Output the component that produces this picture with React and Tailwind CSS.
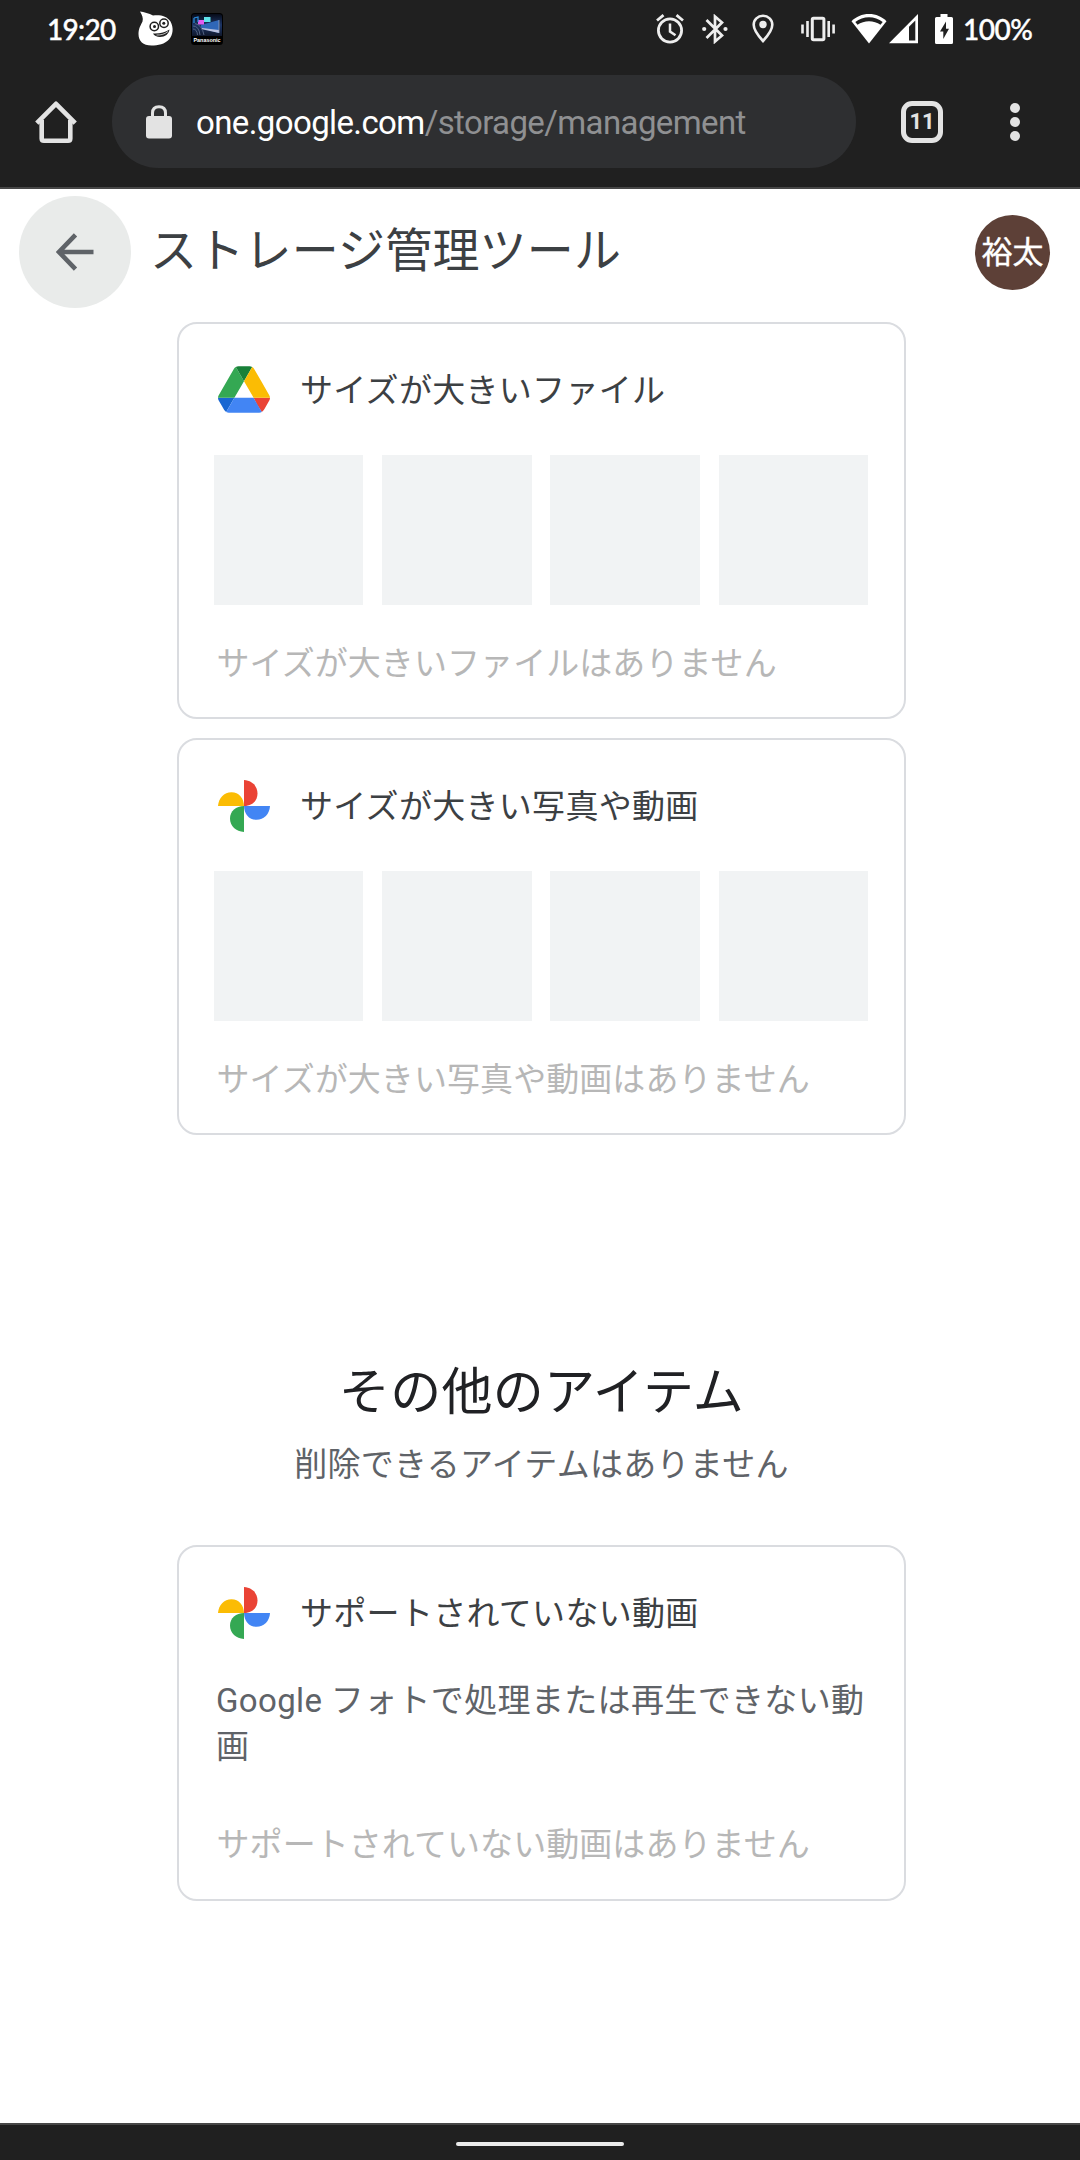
import React from 'react';

const SlimeIcon = () => (
  <svg width="36" height="36" viewBox="0 0 36 36">
    <path
      d="M2 .5C6 1 11 2.500 15 4.500C22 3.500 29 5 32.500 10.500C36 17 35 24 31 28.500C27 33 20 34.500 13.500 34.500C5 34.500 .5 30 .5 23C.5 17 3 14 4.500 10.500C5.500 7 4 4 2 .5Z"
      fill="#fff"
    />
    <g fill="#fff" stroke="#202020" strokeWidth="1.500">
      <circle cx="16.300" cy="15.500" r="4.200" />
      <circle cx="26" cy="12.300" r="4.200" />
    </g>
    <circle cx="16.500" cy="15.500" r="1.500" fill="#202020" />
    <circle cx="25.800" cy="12.300" r="1.500" fill="#202020" />
    <path d="M15 22.500C21 23 27 21.500 31.500 18.500C31 23 27 26 22 26C19 26 16 24.800 15 22.500Z" fill="#202020" />
    <path d="M18.500 24C23 24.300 27 23 30 20.500" fill="none" stroke="#fff" strokeWidth=".7" />
  </svg>
);

const PanasonicIcon = () => (
  <svg width="32" height="32" viewBox="0 0 32 32">
    <defs>
      <linearGradient id="tvBg" x1="0" y1="0" x2="0" y2="1">
        <stop offset="0" stopColor="#070b18" />
        <stop offset=".5" stopColor="#1c3566" />
        <stop offset="1" stopColor="#10182c" />
      </linearGradient>
    </defs>
    <rect width="32" height="32" rx="3.500" fill="#000" />
    <path d="M1 3.500Q1 1 3.500 1H28.500Q31 1 31 3.500V23H1Z" fill="url(#tvBg)" />
    <path d="M10 12L28 7V20L10 15Z" fill="#2f67b8" />
    <path d="M11 15L28 17V20L10 16Z" fill="#b9c2df" />
    <path d="M28 7V20" stroke="#9aa5bd" strokeWidth=".8" />
    <rect x="13" y="4" width="6.500" height="5" fill="#5fe3ea" />
    <rect x="7" y="7" width="6" height="4.500" fill="#e25cf0" />
    <path d="M3 5L7 4V9M3 5V10" fill="none" stroke="#2a8fe0" strokeWidth="1.200" />
    <g fill="none" stroke="#536282" strokeWidth="1">
      <path d="M2 13Q8 13 9 22" />
      <path d="M2 16Q6 16 6.500 22" />
      <path d="M4 10.500Q11 12 13 22" />
    </g>
    <text x="16" y="29" textAnchor="middle" fill="#fff" fontSize="6" fontWeight="700" fontFamily="Liberation Sans" textLength="27" lengthAdjust="spacingAndGlyphs">
      Panasonic
    </text>
  </svg>
);

const AlarmIcon = () => (
  <svg width="28" height="30" viewBox="0 0 28 30" fill="none" stroke="#eee">
    <circle cx="14" cy="16.500" r="11.600" strokeWidth="2.800" />
    <path d="M1 6.500L7.500 1.200M27 6.500L20.500 1.200" strokeWidth="2.800" />
    <path d="M14 9.500V17.500L19.500 21.200" strokeWidth="2.500" />
  </svg>
);

const BluetoothIcon = () => (
  <svg width="26" height="30" viewBox="0 0 26 30" fill="none" stroke="#eee">
    <path d="M4.500 6L20 21.500L13 27.500V2.500L20 8.500L4.500 24" strokeWidth="2.700" />
    <circle cx="2.200" cy="15" r="2.100" fill="#eee" stroke="none" />
    <circle cx="23.500" cy="15" r="2.100" fill="#eee" stroke="none" />
  </svg>
);

const PinIcon = () => (
  <svg width="22" height="30" viewBox="0 0 22 30">
    <path
      d="M11 1.800C5.800 1.800 1.700 5.800 1.700 10.800C1.700 17 11 27 11 27S20.300 17 20.300 10.800C20.300 5.800 16.200 1.800 11 1.800Z"
      fill="none"
      stroke="#eee"
      strokeWidth="2.600"
    />
    <circle cx="11" cy="10.500" r="3.700" fill="#eee" />
  </svg>
);

const VibrateIcon = () => (
  <svg width="34" height="26" viewBox="0 0 34 26" fill="none" stroke="#eee" strokeWidth="2.600">
    <rect x="11.300" y="2.300" width="11.600" height="21.400" rx="1.200" strokeWidth="3" />
    <path d="M1.500 8.500V17.500M6.500 5V21M27.700 5V21M32.600 8.500V17.500" />
  </svg>
);

const WifiIcon = () => (
  <svg width="36" height="30" viewBox="0 0 36 30">
    <path d="M18 0C11 0 5 2.700 .5 7.200L18 29.500L35.500 7.200C31 2.700 25 0 18 0Z" fill="#fff" />
    <path d="M4.300 8C12 1.700 24 1.700 31.700 8L29.500 10.800C23 6 13 6 6.500 10.800Z" fill="#202020" />
  </svg>
);

const SignalIcon = () => (
  <svg width="29" height="30" viewBox="0 0 29 30">
    <path d="M0 29.300L29 0V29.300Z" fill="#fff" />
    <path d="M20 12.700L26.300 6.500V26.500H20Z" fill="#202020" />
  </svg>
);

const BatteryIcon = () => (
  <svg width="18" height="30" viewBox="0 0 18 30">
    <path d="M5.500 0H12.500V3H16.500Q18 3 18 4.500V28.500Q18 30 16.500 30H1.500Q0 30 0 28.500V4.500Q0 3 1.500 3H5.500Z" fill="#fff" />
    <path d="M11 7.500L5 17.500H8.300V25L14 14.700H11Z" fill="#202020" />
  </svg>
);

const HomeIcon = () => (
  <svg width="42" height="42" viewBox="0 0 42 42" fill="none" stroke="#e3e3e3" strokeWidth="4.600">
    <path d="M1.800 22.200L21 2.800L40.200 22.200" strokeLinejoin="round" />
    <path d="M6.700 19V37.500Q6.700 39.700 8.900 39.700H33.100Q35.300 39.700 35.300 37.500V19" />
  </svg>
);

const LockIcon = () => (
  <svg width="26" height="34" viewBox="0 0 26 34">
    <rect x="0" y="11" width="26" height="22.500" rx="3" fill="#e3e3e3" />
    <path d="M6.500 12V8Q6.500 1.700 13 1.700T19.500 8V12" fill="none" stroke="#e3e3e3" strokeWidth="3" />
  </svg>
);

const ArrowIcon = () => (
  <svg width="38" height="38" viewBox="0 0 38 38" fill="none" stroke="#5f6368" strokeWidth="4.600">
    <path d="M19.500 1.800L3 19L19.500 36.200M3 19H37.500" />
  </svg>
);

const DriveIcon = () => (
  <svg width="52" height="47" viewBox="0 0 87.300 78">
    <path d="M6.600 66.850l3.850 6.650c.8 1.400 1.950 2.500 3.300 3.300l13.750-23.800H0c0 1.550.4 3.100 1.200 4.500z" fill="#1967d2" />
    <path d="M43.650 25L29.900 1.200c-1.350.8-2.500 1.900-3.300 3.300l-25.400 44A9 9 0 0 0 0 53h27.500z" fill="#34a853" />
    <path d="M73.550 76.800c1.350-.8 2.500-1.900 3.300-3.300l1.600-2.750 7.650-13.250c.8-1.400 1.200-2.950 1.200-4.500H59.800l5.850 11.500z" fill="#ea4335" />
    <path d="M43.650 25L57.400 1.200C56.050.4 54.500 0 52.900 0H34.400c-1.600 0-3.150.45-4.500 1.200z" fill="#188038" />
    <path d="M59.800 53H27.500L13.750 76.800c1.350.8 2.900 1.200 4.500 1.200h50.800c1.600 0 3.150-.45 4.500-1.200z" fill="#4285f4" />
    <path d="M73.400 26.500L60.700 4.500c-.8-1.400-1.950-2.500-3.300-3.300L43.650 25 59.800 53h27.450c0-1.550-.4-3.100-1.200-4.500z" fill="#fbbc04" />
  </svg>
);

const PhotosIcon = () => (
  <svg width="52" height="52" viewBox="0 0 52 52">
    <path d="M26 0C34 .5 39.500 6 39.500 13.500S34 25.800 26 26Z" fill="#ea4335" />
    <path d="M52 26C51.500 34 46 39.800 38.500 39.800S26.200 34 26 26Z" fill="#4285f4" />
    <path d="M26 52C18 51.500 12 46 12 38.500S18 26.200 26 26Z" fill="#34a853" />
    <path d="M0 26C.5 18 6 12.200 13.500 12.200S25.800 18 26 26Z" fill="#fbbc04" />
  </svg>
);

const StatusBar = () => (
  <div className="flex h-14 items-center pl-[47px] pr-[47px] pt-px text-white">
    <span className="w-[91px] whitespace-nowrap font-['Lato'] text-[28px] font-medium leading-none tracking-[-0.7px] [-webkit-text-stroke:0.4px]">
      19:20
    </span>
    <SlimeIcon />
    <div className="ml-[17px]">
      <PanasonicIcon />
    </div>
    <div className="ml-auto flex items-center">
      <AlarmIcon />
      <div className="ml-[18px]">
        <BluetoothIcon />
      </div>
      <div className="ml-6">
        <PinIcon />
      </div>
      <div className="ml-[27px]">
        <VibrateIcon />
      </div>
      <div className="ml-4">
        <WifiIcon />
      </div>
      <div className="ml-0.5">
        <SignalIcon />
      </div>
      <div className="ml-[17px]">
        <BatteryIcon />
      </div>
      <span className="ml-2.5 w-[70px] whitespace-nowrap font-['Lato'] text-[28px] font-medium leading-none tracking-[-0.5px] [-webkit-text-stroke:0.4px]">
        100%
      </span>
    </div>
  </div>
);

const BrowserBar = () => (
  <div className="flex h-[131px] items-center pl-[35px] pr-[60px]">
    <HomeIcon />
    <div className="ml-[35px] flex h-[93px] w-[744px] items-center rounded-full bg-[#2e2f31] pl-[34px]">
      <LockIcon />
      <span className="ml-6 mt-[3px] whitespace-nowrap font-['Roboto'] text-[33px] tracking-[-0.610px] text-[#8f9092]">
        <span className="text-white">one.google.com</span>/storage/management
      </span>
    </div>
    <div className="ml-[45px] flex size-[42px] items-center justify-center rounded-[11px] border-[5px] border-[#e3e3e3] pt-px font-['Roboto'] text-[22px] font-bold leading-none text-[#e3e3e3]">
      11
    </div>
    <div className="ml-auto flex flex-col gap-1">
      <span className="size-2.5 rounded-full bg-[#e3e3e3]" />
      <span className="size-2.5 rounded-full bg-[#e3e3e3]" />
      <span className="size-2.5 rounded-full bg-[#e3e3e3]" />
    </div>
  </div>
);

const PageHeader = () => (
  <header className="flex h-[133px] items-start pl-[19px] pr-[30px] pt-[7px]">
    <div className="flex size-28 items-center justify-center rounded-full bg-[#e9ebea]">
      <ArrowIcon />
    </div>
    <h1 className="ml-[19px] mt-5 text-[47px] leading-[70px] tracking-[0.220px] text-[#3c4043]">ストレージ管理ツール</h1>
    <div className="ml-auto mt-[19px] flex size-[75px] items-center justify-center rounded-full bg-[#5d4037] text-[31px] leading-none text-white [-webkit-text-stroke:0.4px]">
      裕太
    </div>
  </header>
);

const ItemCard = ({ icon, title, description, emptyText }) => (
  <section
    className={
      description
        ? 'h-[356px] w-[729px] rounded-[20px] border-2 border-[#dadce0]'
        : 'h-[397px] w-[729px] rounded-[20px] border-2 border-[#dadce0]'
    }
  >
    <div className="flex h-[131px] items-center pl-[39px]">
      {icon}
      <h3 className="ml-[30px] mt-[3px] text-[33px] leading-[46px] tracking-[0.300px] text-[#3c4043]">{title}</h3>
    </div>
    {description ? (
      <p className="h-[108px] whitespace-nowrap pl-[37px] text-[33px] leading-[46px] tracking-[0.350px] text-[#5f6368]">
        {description}
      </p>
    ) : (
      <div className="grid h-[150px] grid-cols-4 gap-x-[18.700px] pl-[35px] pr-9">
        {[0, 1, 2, 3].map((index) => (
          <div key={index} className="bg-[#f1f3f4]" />
        ))}
      </div>
    )}
    <p className="whitespace-nowrap pl-[37.500px] pt-9 text-[33px] leading-[46px] tracking-[0.070px] text-[#b7b7b7]">
      {emptyText}
    </p>
  </section>
);

const App = () => {
  return (
    <div className="flex h-[2160px] w-[1080px] flex-col overflow-hidden bg-white font-['Roboto','Noto_Sans_CJK_JP',sans-serif]">
      <div className="h-[189px] border-b-2 border-[#474747] bg-[#202020]">
        <StatusBar />
        <BrowserBar />
      </div>
      <PageHeader />
      <main className="flex flex-1 flex-col pl-[177px]">
        <ItemCard icon={<DriveIcon />} title="サイズが大きいファイル" emptyText="サイズが大きいファイルはありません" />
        <div className="mt-[19px]">
          <ItemCard icon={<PhotosIcon />} title="サイズが大きい写真や動画" emptyText="サイズが大きい写真や動画はありません" />
        </div>
        <div className="mt-[221px] w-[729px] text-center">
          <h2 className="text-[51px] leading-[74px] tracking-[0.300px] text-[#202124]">その他のアイテム</h2>
          <p className="mt-3 text-[33px] leading-[46px] tracking-[0.300px] text-[#5f6368]">
            削除できるアイテムはありません
          </p>
        </div>
        <div className="mt-[57px]">
          <ItemCard
            icon={<PhotosIcon />}
            title="サポートされていない動画"
            description={
              <>
                Google フォトで処理または再生できない動
                <br />画
              </>
            }
            emptyText="サポートされていない動画はありません"
          />
        </div>
      </main>
      <div className="flex h-[37px] justify-center border-t-2 border-[#474747] bg-[#202020] pt-[17px]">
        <div className="h-1 w-[168px] rounded-full bg-[#ebebeb]" />
      </div>
    </div>
  );
};

export default App;
